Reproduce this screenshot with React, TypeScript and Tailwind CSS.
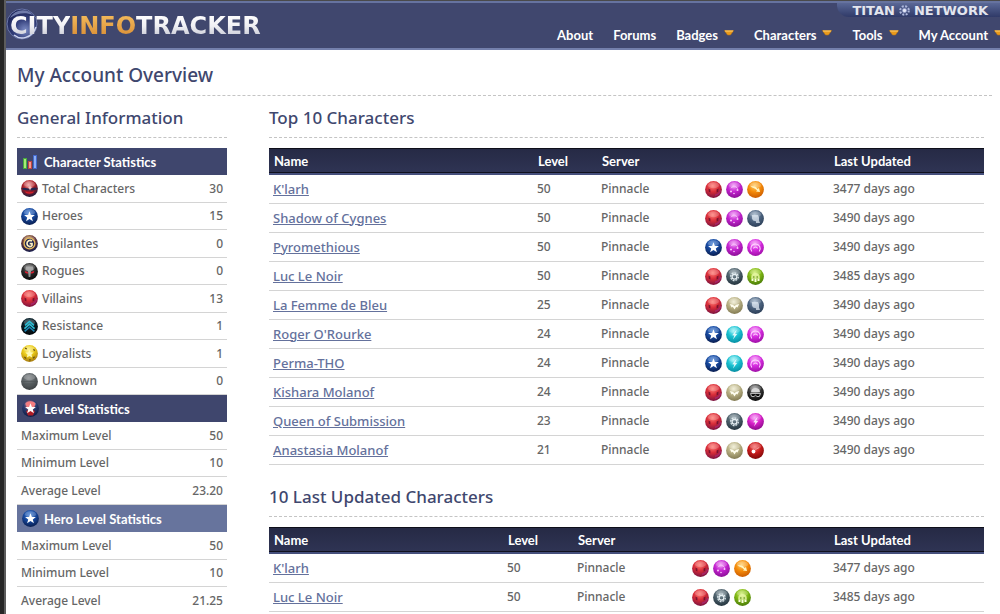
import React, { useId } from "react";

type OrbKind =
  | "total" | "hero" | "vigilante" | "rogue" | "villain" | "resistance" | "loyalist" | "unknown" | "level"
  | "control" | "claw" | "pinkBolt" | "orange" | "steel" | "gear" | "green" | "cyanBolt" | "khaki" | "mask" | "redDot";

// [highlight, body, rim]
const orbColors: Record<OrbKind, [string, string, string]> = {
  total: ["#f4a0a0", "#a81c24", "#1c1c3c"],
  hero: ["#4d86d8", "#16479c", "#0a1f52"],
  vigilante: ["#e8c070", "#6a3a3a", "#151c4c"],
  rogue: ["#777777", "#2c2c2c", "#0a0a0a"],
  villain: ["#ff7c74", "#d82c38", "#7c1440"],
  resistance: ["#1c4250", "#0a1c24", "#020608"],
  loyalist: ["#fff27a", "#e8c818", "#a87c10"],
  unknown: ["#84898c", "#5c6265", "#3c4042"],
  level: ["#f06a6a", "#2a3c70", "#101c44"],
  control: ["#f39af8", "#c322cf", "#8c1098"],
  claw: ["#f79cf8", "#d62be0", "#a010a8"],
  pinkBolt: ["#f79cf8", "#d820c8", "#8c0c8c"],
  orange: ["#ffd070", "#f58c0a", "#cc5c00"],
  steel: ["#a4b8cc", "#4d6480", "#2c3f58"],
  gear: ["#98a8b0", "#4c5f6a", "#24343e"],
  green: ["#d0ee70", "#80b814", "#4a7c08"],
  cyanBolt: ["#a0f6fa", "#18c0d0", "#0890a4"],
  khaki: ["#efecd0", "#b8b084", "#847c54"],
  mask: ["#b0b0b0", "#383838", "#080808"],
  redDot: ["#f87070", "#c81c1c", "#800808"],
};

const STAR = "M8.5 3.2l1.4 3.7 4 .1-3.1 2.5 1.1 3.8-3.4-2.2-3.4 2.2 1.1-3.8L3.1 7l4-.1z";
const BOLT = "M10.8 3.6L6.2 9.2l2.1.2-1.3 4 4.2-5.4-2.1-.3z";

const OrbGlyph = ({ kind }: { kind: OrbKind }) => {
  switch (kind) {
    case "hero":
      return <path d={STAR} fill="#fff" />;
    case "level":
      return (
        <>
          <path d="M3.5 3.5C6 .6 11 .6 13.5 3.5L12 8H5z" fill="#f47c80" />
          <path d="M4 11l4.5-2 4.5 2-2 4.6H6z" fill="#b01c24" />
          <path d={STAR} fill="#fff" />
        </>
      );
    case "total":
      return (
        <>
          <path d="M.8 8.5C4 6.5 6 8.6 8.5 8.5S13 6.5 16.2 8.5C15.5 10 13 10.5 8.5 10.5S1.5 10 .8 8.5z" fill="#26254e" />
          <path d="M4 11.5c3 1 6 1 9 0-1 3-8 3-9 0z" fill="#d8202c" />
          <path d="M9 5.2l.8 2 1.6.6-1.6.8-.8 1.8-.8-1.8-1.6-.8 1.6-.6z" fill="#f6c8c8" />
        </>
      );
    case "vigilante":
      return (
        <>
          <circle cx="8.5" cy="8.5" r="5.4" fill="#1c2452" stroke="#e4b85c" strokeWidth="1.4" />
          <path d="M11 6.2C9 4.2 5.6 6 6 8.8s3.8 3.6 5 1.6V8.6H8.6" fill="none" stroke="#fff0c0" strokeWidth="1.7" />
        </>
      );
    case "rogue":
      return (
        <>
          <path d="M5 3.6h7l.6 3.4-2.6 1-.7 6H7.7L7 8l-2.6-1z" fill="#b4b4b4" opacity=".8" />
          <path d="M3.8 8l3.4 1.2-.6 1.6-2.4-1zM13.2 8L9.8 9.2l.6 1.6 2.4-1z" fill="#e01c30" />
        </>
      );
    case "villain":
      return (
        <>
          <path d="M3.4 7.6l2 1v3l-1.6-.8zM13.6 7.6l-2 1v3l1.6-.8z" fill="#5c0c2c" opacity=".75" />
          <path d="M10 14.2c3-.4 5-2.4 5.6-5" stroke="#a82878" strokeWidth="1.4" fill="none" opacity=".8" />
        </>
      );
    case "resistance":
      return (
        <g fill="none" stroke="#2cc0d8" strokeWidth="1.5">
          <path d="M4 7.4l4.5-4 4.5 4" />
          <path d="M3.4 10.6l5.1-4.4 5.1 4.4" />
          <path d="M3.6 13.4L8.5 9.2l4.9 4.2" stroke="#1c84b4" />
        </g>
      );
    case "loyalist":
      return (
        <>
          <path d="M8.5 4.4l1.2 2.8 3 .4-2.2 2 .6 3-2.6-1.5-2.6 1.5.6-3-2.2-2 3-.4z" fill="#fffbb8" />
          <path d="M4 3.2l1.8.6M12.6 4.2l1 1.6M3.4 12l1.8 1.4M12 13.2l1.6-1.4M8 14.8h1.8" stroke="#6c5410" strokeWidth="1.3" />
        </>
      );
    case "unknown":
      return <path d="M1.5 8.5h14M2 11h13" stroke="#4c5254" strokeWidth="1" opacity=".6" />;
    case "control":
      return (
        <g fill="#ffe0ff" opacity=".9">
          <circle cx="5" cy="10.5" r="1" />
          <circle cx="8" cy="12.5" r=".8" />
          <circle cx="11.5" cy="9" r="1" />
          <path d="M5 7.2c2-2.8 5-2.4 6.500.4" fill="none" stroke="#f8c8fc" />
        </g>
      );
    case "claw":
      return (
        <path d="M4.8 12.5C2.5 9 4.5 5 8.5 5s6 4 3.7 7.5M6.5 9.5c.4-2 3.6-2 4 0" fill="none" stroke="#ffd4ff" strokeWidth="1.1" />
      );
    case "pinkBolt":
    case "cyanBolt":
      return <path d={BOLT} fill="#fff" opacity=".85" />;
    case "orange":
      return <path d="M3.5 5.5c4-.8 6 .6 7 2.5l1.5-1 1 4-4-.6 1-1C8.5 7.8 6 6.8 3.5 5.5z" fill="#fff4c0" />;
    case "steel":
      return <path d="M5 5h6l1 2.5v3l1 2.5H9v-1.8l-3-.7-1-2z" fill="#dfe8f2" opacity=".75" />;
    case "gear":
      return (
        <>
          <circle cx="8.5" cy="8.7" r="3.8" fill="none" stroke="#dbe6ea" strokeWidth="1.4" strokeDasharray="1.9 1" />
          <circle cx="8.5" cy="8.7" r="2.4" fill="none" stroke="#e8f0f4" strokeWidth="1.2" />
        </>
      );
    case "green":
      return (
        <>
          <path d="M4.2 9C4.2 3.5 12.8 3.5 12.8 9v1.5H4.2z" fill="#e8f8a8" opacity=".8" />
          <path d="M4.5 10.5h2V13h-2zM7.5 10.5h2V14h-2zM10.5 10.5h2V13h-2z" fill="#fbffe0" />
          <path d="M6 9h1.5M9.5 9H11" stroke="#4c7c08" strokeWidth="1.2" />
        </>
      );
    case "khaki":
      return <path d="M3.8 7l3 .8 1.7 1.4 1.7-1.4 3-.8-1.8 3.4-1.2-.6-1.7 2.8-1.7-2.8-1.2.6z" fill="#fffef0" />;
    case "mask":
      return (
        <>
          <path d="M4 8.2c0-5.600 9-5.600 9 0z" fill="#d8d8d8" />
          <path d="M3.5 9.5h10l-1.2 3H10l-1.5-1.3L7 12.5H4.7z" fill="#0c0c0c" stroke="#c8c8c8" strokeWidth=".9" />
        </>
      );
    case "redDot":
      return (
        <>
          <circle cx="6.5" cy="9.5" r="1.9" fill="#fff" />
          <path d="M8 8l4-2.5" stroke="#f4a0a0" strokeWidth=".8" />
        </>
      );
    default:
      return null;
  }
};

const Orb = ({ kind }: { kind: OrbKind }) => {
  const id = useId();
  const [light, body, rim] = orbColors[kind];
  return (
    <svg width="17" height="17" viewBox="0 0 17 17" className="block shrink-0" aria-hidden="true">
      <defs>
        <radialGradient id={id} cx="45%" cy="28%" r="72%">
          <stop offset="0" stopColor={light} />
          <stop offset=".5" stopColor={body} />
          <stop offset="1" stopColor={rim} />
        </radialGradient>
      </defs>
      <circle cx="8.5" cy="8.5" r="8.4" fill={`url(#${id})`} />
      <ellipse cx="8.5" cy="4.2" rx="5.6" ry="3" fill="#fff" opacity=".2" />
      <OrbGlyph kind={kind} />
    </svg>
  );
};

const BarsIcon = () => (
  <svg width="17" height="17" viewBox="0 0 17 17" className="block shrink-0" aria-hidden="true">
    <rect x="1.5" y="5.5" width="3" height="10" fill="#a4ec74" stroke="#48a840" />
    <rect x="6.5" y="8.5" width="3" height="7" fill="#f49c8c" stroke="#c04444" />
    <rect x="11.5" y="2.5" width="3" height="13" fill="#8cb0f8" stroke="#4468cc" />
  </svg>
);

const navItems = [
  { label: "About", menu: false },
  { label: "Forums", menu: false },
  { label: "Badges", menu: true },
  { label: "Characters", menu: true },
  { label: "Tools", menu: true },
  { label: "My Account", menu: true },
];

const Logo = () => (
  <a href="#" className="relative flex h-full items-center pl-1 font-['DejaVu_Sans',sans-serif] text-[24px] font-bold leading-none">
    <svg width="34" height="34" viewBox="0 0 34 34" className="absolute left-0 top-1" aria-hidden="true">
      <defs>
        <radialGradient id="logo-sphere" cx="60%" cy="70%" r="75%">
          <stop offset="0" stopColor="#7c8cc4" />
          <stop offset=".45" stopColor="#36427e" />
          <stop offset="1" stopColor="#171f50" />
        </radialGradient>
      </defs>
      <circle cx="16" cy="17" r="15" fill="url(#logo-sphere)" stroke="#6a76a8" />
      <path d="M4 11C8 3 20 0 27 8c-8-3-16-2-23 3z" fill="#a4b0dc" opacity=".6" />
      <path d="M8 28c6 5 18 4 22-8" fill="none" stroke="#cfd6f0" strokeWidth="1.5" />
    </svg>
    <span className="relative bg-linear-to-b from-white via-[#f0f0f4] to-[#c4c6d2] bg-clip-text text-transparent">CITY</span>
    <span className="relative bg-linear-to-b from-[#f4bc5c] to-[#d88c34] bg-clip-text text-transparent">INFO</span>
    <span className="relative bg-linear-to-b from-white via-[#f0f0f4] to-[#c4c6d2] bg-clip-text text-transparent">TRACKER</span>
  </a>
);

const Header = () => (
  <header className="relative h-[50px] overflow-hidden border-t border-b-2 border-t-[#4a4a4a] border-b-[#7480ac] bg-[#40476e]">
    <div className="flex h-full items-stretch justify-between border-t-2 border-[#66739f]">
      <Logo />
      <nav className="-mr-1 flex items-end gap-5 pb-1 font-['Lato',sans-serif] text-[13px] font-bold leading-[18px] text-white">
        {navItems.map((item) => (
          <a key={item.label} href="#" className="flex items-center gap-1.5 whitespace-nowrap">
            {item.label}
            {item.menu && (
              <svg width="10" height="6" viewBox="0 0 10 6" className="mb-1" aria-hidden="true">
                <path d="M.3.5h9.4L6.5 5h-3z" fill="#e89a1c" stroke="#b87414" strokeWidth=".6" />
                <path d="M1 1h8" stroke="#ffd070" />
              </svg>
            )}
          </a>
        ))}
      </nav>
    </div>
    <a
      href="#"
      className="absolute right-0 top-0.5 flex h-3.5 w-[163px] items-center justify-end gap-1 rounded-bl-xl bg-linear-to-b from-[#5a6896] to-[#303a68] pr-3 font-['DejaVu_Sans',sans-serif] text-[13px] font-bold leading-none text-[#e4e6ee]"
    >
      TITAN
      <svg width="11" height="11" viewBox="0 0 11 11" aria-hidden="true">
        <circle cx="5.5" cy="5.5" r="4.3" fill="none" stroke="#aeb8dc" strokeWidth="2" strokeDasharray="2 1.4" />
        <circle cx="5.5" cy="5.5" r="2.2" fill="#e4e8f8" stroke="#7c88b8" strokeWidth=".8" />
      </svg>
      NETWORK
    </a>
  </header>
);

interface Stat {
  label: string;
  value: string;
  orb?: OrbKind;
}

const characterStats: Stat[] = [
  { label: "Total Characters", value: "30", orb: "total" },
  { label: "Heroes", value: "15", orb: "hero" },
  { label: "Vigilantes", value: "0", orb: "vigilante" },
  { label: "Rogues", value: "0", orb: "rogue" },
  { label: "Villains", value: "13", orb: "villain" },
  { label: "Resistance", value: "1", orb: "resistance" },
  { label: "Loyalists", value: "1", orb: "loyalist" },
  { label: "Unknown", value: "0", orb: "unknown" },
];

const levelStats: Stat[] = [
  { label: "Maximum Level", value: "50" },
  { label: "Minimum Level", value: "10" },
  { label: "Average Level", value: "23.20" },
];

const heroLevelStats: Stat[] = [
  { label: "Maximum Level", value: "50" },
  { label: "Minimum Level", value: "10" },
  { label: "Average Level", value: "21.25" },
];

interface StatTableProps {
  title: string;
  icon: React.ReactNode;
  stats: Stat[];
  light?: boolean;
}

const StatTable = ({ title, icon, stats, light }: StatTableProps) => (
  <table className="w-full border-separate border-spacing-0">
    <thead>
      <tr className={light ? "h-[27px] bg-[#67749d]" : "h-[27px] bg-[#3f466d]"}>
        <th colSpan={2} className="p-0 pl-[5px] text-left font-['Lato',sans-serif] text-[13px] font-bold text-white">
          <div className="flex items-center gap-[5px]">
            {icon}
            {title}
          </div>
        </th>
      </tr>
    </thead>
    <tbody>
      {stats.map((stat) => (
        <tr key={stat.label} className="odd:h-7 even:h-[27px]">
          <td className="border-b border-[#d4d4d4] p-0 pl-1">
            <div className="flex items-center gap-1">
              {stat.orb && <Orb kind={stat.orb} />}
              {stat.label}
            </div>
          </td>
          <td className="border-b border-[#d4d4d4] p-0 pr-1 text-right">{stat.value}</td>
        </tr>
      ))}
    </tbody>
  </table>
);

interface Character {
  name: string;
  level: number;
  orbs: OrbKind[];
  days: number;
}

const topCharacters: Character[] = [
  { name: "K'larh", level: 50, orbs: ["villain", "control", "orange"], days: 3477 },
  { name: "Shadow of Cygnes", level: 50, orbs: ["villain", "control", "steel"], days: 3490 },
  { name: "Pyromethious", level: 50, orbs: ["hero", "control", "claw"], days: 3490 },
  { name: "Luc Le Noir", level: 50, orbs: ["villain", "gear", "green"], days: 3485 },
  { name: "La Femme de Bleu", level: 25, orbs: ["villain", "khaki", "steel"], days: 3490 },
  { name: "Roger O'Rourke", level: 24, orbs: ["hero", "cyanBolt", "claw"], days: 3490 },
  { name: "Perma-THO", level: 24, orbs: ["hero", "cyanBolt", "claw"], days: 3490 },
  { name: "Kishara Molanof", level: 24, orbs: ["villain", "khaki", "mask"], days: 3490 },
  { name: "Queen of Submission", level: 23, orbs: ["villain", "gear", "pinkBolt"], days: 3490 },
  { name: "Anastasia Molanof", level: 21, orbs: ["villain", "khaki", "redDot"], days: 3490 },
];

const lastUpdated = [topCharacters[0], topCharacters[3]];

const CharacterTable = ({ rows, cols }: { rows: Character[]; cols: string[] }) => (
  <table className="w-full table-fixed border-separate border-spacing-0">
    <colgroup>
      {cols.map((c, i) => (
        <col key={i} className={c} />
      ))}
    </colgroup>
    <thead>
      <tr className="h-[27px] text-left font-['Lato',sans-serif] text-[13px] text-white [&>th]:border-t [&>th]:border-b-2 [&>th]:border-t-[#0e0f1a] [&>th]:border-b-[#454f7c] [&>th]:bg-linear-to-b [&>th]:from-[#262a45] [&>th]:to-[#2f3454] [&>th]:px-[5px] [&>th]:py-0 [&>th]:font-bold [&>th]:shadow-[inset_0_-1px_0_#10111e]">
        <th>Name</th>
        <th>Level</th>
        <th>Server</th>
        <th aria-label="Origin"></th>
        <th>Last Updated</th>
      </tr>
    </thead>
    <tbody>
      {rows.map((row) => (
        <tr key={row.name} className="h-[29px] [&>td]:border-b [&>td]:border-[#d4d4d4] [&>td]:px-1 [&>td]:py-0">
          <td>
            <a href="#" className="text-[13px] text-[#64719c] underline">{row.name}</a>
          </td>
          <td>{row.level}</td>
          <td>Pinnacle</td>
          <td>
            <div className="flex gap-1">
              {row.orbs.map((orb) => (
                <Orb key={orb} kind={orb} />
              ))}
            </div>
          </td>
          <td>{row.days} days ago</td>
        </tr>
      ))}
    </tbody>
  </table>
);

const SectionTitle = ({ children }: { children: React.ReactNode }) => (
  <h2 className="mb-2.5 flex h-[42px] items-center border-b border-dashed border-[#c4c4c4] pt-0.5 text-[17px] font-medium text-[#40476e]">
    {children}
  </h2>
);

export default function App() {
  return (
    <div className="flex h-screen overflow-hidden bg-white font-['Noto_Sans',sans-serif] text-[12px] font-medium leading-4 text-[#666666]">
      <div className="w-1.5 shrink-0 border-r-2 border-[#5c5c5c] bg-[#262626]" />
      <div className="min-w-0 flex-1">
        <Header />
        <main className="pl-[11px] pr-2">
          <h1 className="flex h-[46px] items-center border-b border-dashed border-[#c4c4c4] pt-1 text-[19px] font-medium text-[#40476e]">
            My Account Overview
          </h1>
          <div className="grid grid-cols-[210px_1fr] gap-[42px] pr-2">
            <aside>
              <SectionTitle>General Information</SectionTitle>
              <StatTable title="Character Statistics" icon={<BarsIcon />} stats={characterStats} />
              <StatTable title="Level Statistics" icon={<Orb kind="level" />} stats={levelStats} />
              <StatTable title="Hero Level Statistics" icon={<Orb kind="hero" />} stats={heroLevelStats} light />
            </aside>
            <div className="flex flex-col gap-2.5">
              <section>
                <SectionTitle>Top 10 Characters</SectionTitle>
                <CharacterTable rows={topCharacters} cols={["", "w-16", "w-[104px]", "w-32", "w-[155px]"]} />
              </section>
              <section>
                <SectionTitle>10 Last Updated Characters</SectionTitle>
                <CharacterTable rows={lastUpdated} cols={["", "w-[70px]", "w-[115px]", "w-[141px]", "w-[155px]"]} />
              </section>
            </div>
          </div>
        </main>
      </div>
    </div>
  );
}
